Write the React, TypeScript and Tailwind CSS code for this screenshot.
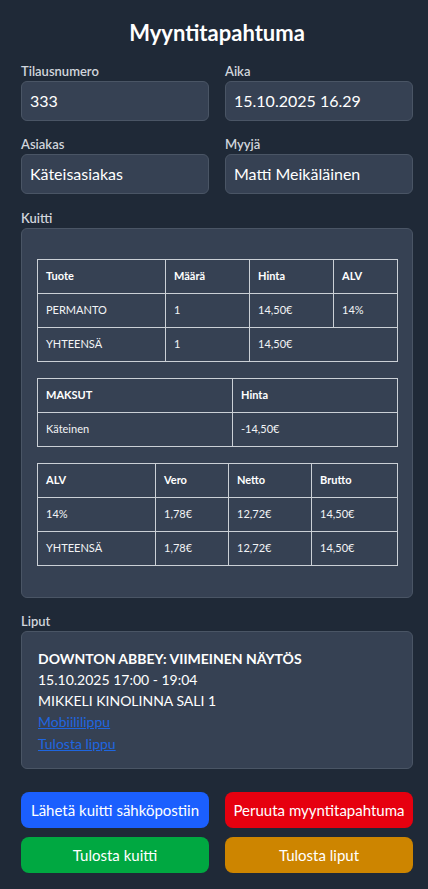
import React from "react";

const font = { fontFamily: "Lato, 'Noto Sans', sans-serif" };

function Label({ children }: { children: React.ReactNode }) {
  return <div className="text-[13px] leading-4 font-semibold text-gray-300">{children}</div>;
}

function Field({ label, value }: { label: string; value: string }) {
  return (
    <div className="flex flex-col">
      <Label>{label}</Label>
      <div className="mt-[2px] h-10 rounded-md border border-gray-600 bg-gray-700 px-2 flex items-center text-base text-white">
        {value}
      </div>
    </div>
  );
}

const cell = "border border-[#cbd0d6] px-2 h-[34px] align-middle";

function Table({
  widths,
  head,
  rows,
}: {
  widths: number[];
  head: string[];
  rows: (string | [string, number])[][];
}) {
  return (
    <table className="w-full table-fixed border-collapse text-[11px] text-gray-100">
      <colgroup>
        {widths.map((w, i) => (
          <col key={i} style={{ width: w }} />
        ))}
      </colgroup>
      <thead>
        <tr>
          {head.map((h) => (
            <th key={h} className={`${cell} text-left font-bold text-white`}>
              {h}
            </th>
          ))}
        </tr>
      </thead>
      <tbody>
        {rows.map((r, i) => (
          <tr key={i}>
            {r.map((c, j) =>
              Array.isArray(c) ? (
                <td key={j} colSpan={c[1]} className={cell}>
                  {c[0]}
                </td>
              ) : (
                <td key={j} className={cell}>
                  {c}
                </td>
              )
            )}
          </tr>
        ))}
      </tbody>
    </table>
  );
}

export default function App() {
  return (
    <div className="min-h-screen bg-[#1f2937] pl-[21px] pr-[15px] pt-[19px] pb-4 text-white" style={font}>
      <h1 className="text-center text-[22px] leading-7 font-bold">Myyntitapahtuma</h1>

      <div className="mt-4 grid grid-cols-2 gap-x-4 gap-y-[15px]">
        <Field label="Tilausnumero" value="333" />
        <Field label="Aika" value="15.10.2025 16.29" />
        <Field label="Asiakas" value="Käteisasiakas" />
        <Field label="Myyjä" value="Matti Meikäläinen" />
      </div>

      <div className="mt-4">
        <Label>Kuitti</Label>
        <div className="mt-[2px] rounded-md border border-gray-600 bg-gray-700 px-[15px] pt-[30px] pb-[31px] flex flex-col gap-4">
          <Table
            widths={[128, 84, 84, 64]}
            head={["Tuote", "Määrä", "Hinta", "ALV"]}
            rows={[
              ["PERMANTO", "1", "14,50€", "14%"],
              ["YHTEENSÄ", "1", ["14,50€", 2]],
            ]}
          />
          <Table
            widths={[195, 165]}
            head={["MAKSUT", "Hinta"]}
            rows={[["Käteinen", "-14,50€"]]}
          />
          <Table
            widths={[118, 73, 83, 86]}
            head={["ALV", "Vero", "Netto", "Brutto"]}
            rows={[
              ["14%", "1,78€", "12,72€", "14,50€"],
              ["YHTEENSÄ", "1,78€", "12,72€", "14,50€"],
            ]}
          />
        </div>
      </div>

      <div className="mt-[15px]">
        <Label>Liput</Label>
        <div className="mt-[2px] rounded-md border border-gray-600 bg-gray-700 px-4 pt-4 pb-[14px] text-sm leading-[21px] text-white">
          <div className="font-bold">DOWNTON ABBEY: VIIMEINEN NÄYTÖS</div>
          <div>15.10.2025 17:00 - 19:04</div>
          <div>MIKKELI KINOLINNA SALI 1</div>
          <div className="flex flex-col items-start gap-px">
            <a href="#" className="text-[#1f66e0] underline">
              Mobiililippu
            </a>
            <a href="#" className="text-[#1f66e0] underline">
              Tulosta lippu
            </a>
          </div>
        </div>
      </div>

      <div className="mt-[23px] grid grid-cols-2 gap-x-4 gap-y-[9px]">
        <button className="h-9 rounded-lg bg-[#1b5ffe] text-[15px] text-white">Lähetä kuitti sähköpostiin</button>
        <button className="h-9 rounded-lg bg-[#e6000f] text-[15px] text-white">Peruuta myyntitapahtuma</button>
        <button className="h-9 rounded-lg bg-[#00a841] text-[15px] text-white">Tulosta kuitti</button>
        <button className="h-9 rounded-lg bg-[#cd8500] text-[15px] text-white">Tulosta liput</button>
      </div>
    </div>
  );
}
